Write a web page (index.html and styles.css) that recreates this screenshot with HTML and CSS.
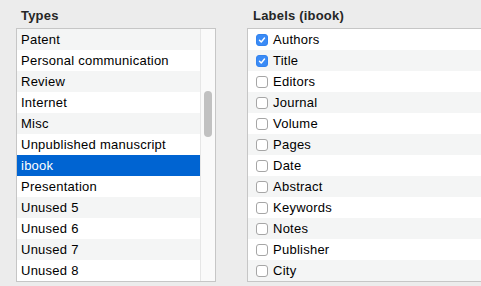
FILE: index.html
```html
<!DOCTYPE html>
<html>
<head>
<meta charset="utf-8">
<link rel="stylesheet" href="styles.css">
</head>
<body>
<div class="page">
  <section class="panel types">
    <h2 class="heading">Types</h2>
    <div class="box">
      <ul class="list">
        <li class="row">Patent</li>
        <li class="row">Personal communication</li>
        <li class="row">Review</li>
        <li class="row">Internet</li>
        <li class="row">Misc</li>
        <li class="row">Unpublished manuscript</li>
        <li class="row selected">ibook</li>
        <li class="row">Presentation</li>
        <li class="row">Unused 5</li>
        <li class="row">Unused 6</li>
        <li class="row">Unused 7</li>
        <li class="row">Unused 8</li>
      </ul>
      <div class="scrollbar"><div class="thumb"></div></div>
    </div>
  </section>
  <section class="panel labels">
    <h2 class="heading">Labels (ibook)</h2>
    <div class="box">
      <ul class="list checks">
        <li class="row"><span class="cb on"><svg viewBox="0 0 12 12"><path d="M3 6.2 L5.1 8.4 L9 3.6" /></svg></span>Authors</li>
        <li class="row"><span class="cb on"><svg viewBox="0 0 12 12"><path d="M3 6.2 L5.1 8.4 L9 3.6" /></svg></span>Title</li>
        <li class="row"><span class="cb"></span>Editors</li>
        <li class="row"><span class="cb"></span>Journal</li>
        <li class="row"><span class="cb"></span>Volume</li>
        <li class="row"><span class="cb"></span>Pages</li>
        <li class="row"><span class="cb"></span>Date</li>
        <li class="row"><span class="cb"></span>Abstract</li>
        <li class="row"><span class="cb"></span>Keywords</li>
        <li class="row"><span class="cb"></span>Notes</li>
        <li class="row"><span class="cb"></span>Publisher</li>
        <li class="row"><span class="cb"></span>City</li>
      </ul>
    </div>
  </section>
</div>
</body>
</html>
```

FILE: styles.css
```css
html, body {
  margin: 0;
  padding: 0;
  background: #ececec;
  overflow: hidden;
  width: 481px;
  height: 286px;
}
body {
  font-family: "Liberation Sans", Arial, sans-serif;
  font-size: 13px;
  color: #000;
}
.page {
  display: flex;
  gap: 31px;
  padding: 8px 0 0 16px;
  overflow: hidden;
}
.heading {
  margin: 0 0 0 5px;
  font-size: 13px;
  font-weight: bold;
  color: #262626;
  height: 20px;
  line-height: 15px;
  letter-spacing: 0.2px;
}
.labels .heading {
  margin-left: 6px;
}
.box {
  display: flex;
  border: 1px solid #c6c6c6;
  background: #fff;
}
.types .box {
  width: 198px;
}
.labels .box {
  width: 233px;
  border-right: none;
}
.list {
  list-style: none;
  margin: 0;
  padding: 0;
  flex: 1;
  letter-spacing: 0.25px;
}
.row {
  height: 21px;
  line-height: 21px;
  padding-left: 4px;
  white-space: nowrap;
}
.row:nth-child(odd) {
  background: #f4f5f5;
}
.checks .row:nth-child(odd) {
  background: #fff;
}
.checks .row:nth-child(even) {
  background: #f4f5f5;
}
.row.selected {
  background: #0064d2;
  color: #fff;
}
.scrollbar {
  width: 14px;
  border-left: 1px solid #e6e6e6;
  background: #fafafa;
  position: relative;
}
.thumb {
  position: absolute;
  left: 3px;
  top: 62px;
  width: 8px;
  height: 46px;
  border-radius: 4px;
  background: #c1c1c1;
}
.checks .row {
  display: flex;
  align-items: center;
  padding-left: 8px;
}
.cb {
  width: 12px;
  height: 12px;
  box-sizing: border-box;
  border: 1px solid #a6a6a6;
  border-radius: 3px;
  background: #fff;
  margin-right: 5px;
  display: flex;
}
.cb.on {
  background: #3a8bf6;
  border-color: #3383ee;
}
.cb svg {
  width: 10px;
  height: 10px;
}
.cb path {
  fill: none;
  stroke: #fff;
  stroke-width: 1.7;
  stroke-linecap: round;
  stroke-linejoin: round;
}
```
